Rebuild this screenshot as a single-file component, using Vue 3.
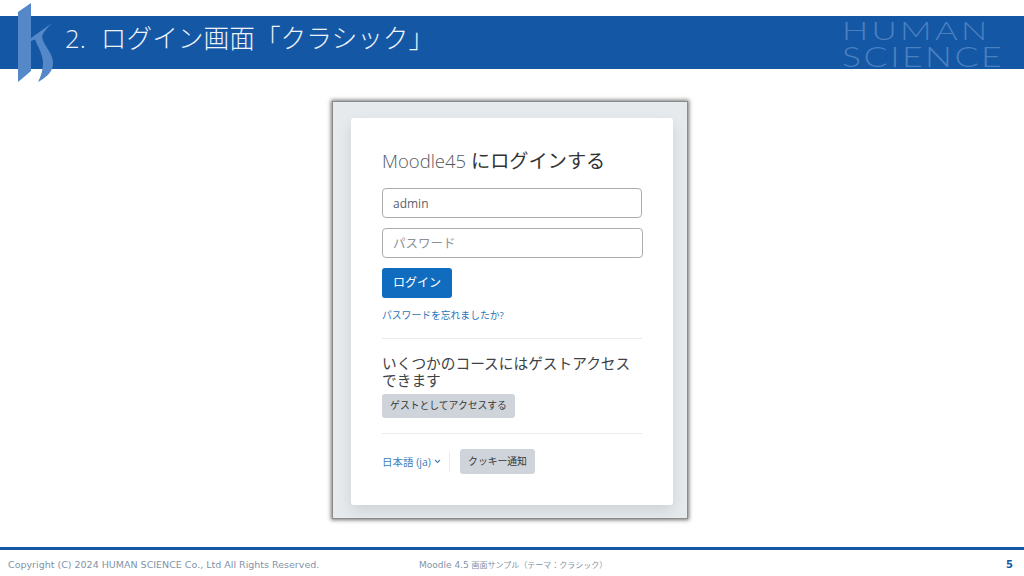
<template>
  <div class="page">
    <header class="band">
      <svg class="mark" width="60" height="84" viewBox="0 0 60 84" aria-hidden="true">
        <path class="mark-a" d="M18 12 L31 3 L31 71 L18 82 Z" />
        <path class="mark-b" d="M52 23 L31 38 L31 41 L35 39.5 C38 47 43 55 43 63 C43 70 41 76 38 82 C45 78 53 73 53 63 C53 52 43 46 42 36 C44 31 48 27 52 23 Z" />
      </svg>
      <h1 class="title"><span class="title-num">2.</span>ログイン画面「クラシック」</h1>
      <div class="brand"><span class="brand-first">HUMAN</span><span class="brand-second">SCIENCE</span></div>
    </header>

    <main class="stage">
      <div class="shot">
        <section class="card">
          <h2 class="heading"><span class="thin">Moodle45</span> <span class="heading-ja">にログインする</span></h2>
          <div class="field field-value">admin</div>
          <div class="field field-wide field-hint">パスワード</div>
          <button class="btn-primary" type="button">ログイン</button>
          <a class="forgot">パスワードを忘れましたか?</a>
          <hr class="rule rule-one" />
          <p class="guest-text">いくつかのコースにはゲストアクセス<br />できます</p>
          <button class="btn-soft btn-guest" type="button">ゲストとしてアクセスする</button>
          <hr class="rule rule-two" />
          <div class="foot-row">
            <a class="lang">日本語 (ja)
              <svg width="7" height="5" viewBox="0 0 7 5" aria-hidden="true"><path d="M1 1 L3.5 3.5 L6 1" fill="none" stroke="#4f7fae" stroke-width="1.1" /></svg>
            </a>
            <span class="sep"></span>
            <button class="btn-soft btn-cookie" type="button">クッキー通知</button>
          </div>
        </section>
      </div>
    </main>

    <footer class="footer">
      <span class="copy">Copyright (C) 2024 HUMAN SCIENCE Co., Ltd All Rights Reserved.</span>
      <span class="sample">Moodle 4.5 <span class="sample-ja">画面サンプル（テーマ：クラシック）</span></span>
      <span class="num">5</span>
    </footer>
  </div>
</template>

<script setup>
</script>

<style>
html, body { margin: 0; background: #fff; }
</style>

<style scoped>
.page {
  width: 1024px;
  height: 576px;
  display: flex;
  flex-direction: column;
  overflow: hidden;
  position: relative;
  background: #fff;
  font-family: "Open Sans", "Noto Sans CJK JP", sans-serif;
}
.band {
  margin-top: 16px;
  height: 53px;
  flex: none;
  background: #1457a5;
  display: flex;
  align-items: center;
  justify-content: space-between;
  padding: 0 22px 0 65px;
  position: relative;
}
.mark { position: absolute; left: 0; top: -16px; }
.mark-a, .mark-b { fill: #5488c8; }
.title {
  margin: 0 0 12px;
  color: #eef3fa;
  font-size: 25.7px;
  font-weight: 300;
  white-space: nowrap;
  font-family: "Open Sans", "Noto Sans CJK JP", sans-serif;
}
.title-num { margin-right: 15px; }
.brand {
  width: 160px;
  display: flex;
  flex-direction: column;
  color: #4a80c0;
  font-family: "Lato", sans-serif;
  font-weight: 300;
  line-height: 26px;
}
.brand-first {
  font-size: 26px;
  letter-spacing: 2.5px;
  transform: scaleX(1.335);
  transform-origin: left center;
  white-space: nowrap;
}
.brand-second {
  font-size: 28px;
  letter-spacing: 2px;
  transform: scaleX(1.27);
  transform-origin: left center;
  white-space: nowrap;
}
.stage {
  flex: 1;
  display: flex;
  justify-content: flex-start;
  align-items: flex-start;
  padding: 32px 0 0 332px;
}
.shot {
  width: 356px;
  height: 418px;
  box-sizing: border-box;
  padding: 16px 15px 13px 18px;
  background: #e7eaed;
  border: 1px solid #8c8c8a;
  box-shadow: 0 0 4px 1px #737376;
}
.card {
  width: 322px;
  height: 387px;
  box-sizing: border-box;
  background: #fff;
  border-radius: 3px;
  padding: 30px 31px 0;
  box-shadow: 0 6px 14px rgba(0, 0, 0, 0.1);
  color: #3a3f44;
}
.heading {
  margin: 0 0 15px;
  font-size: 18.5px;
  line-height: 25px;
  font-weight: 400;
  color: #333;
}
.heading-ja { font-size: 19.2px; }
.thin { color: #555b61; font-weight: 300; }
.field {
  width: 260px;
  height: 30px;
  box-sizing: border-box;
  border: 1px solid #a9adb2;
  border-radius: 4px;
  padding-left: 10px;
  font-size: 12px;
  line-height: 29px;
  margin-bottom: 10px;
}
.field-wide { width: 261px; }
.field-value { color: #5c6369; }
.field-hint { color: #8b9095; font-size: 12.5px; }
.btn-primary {
  display: block;
  width: 70px;
  height: 30px;
  padding: 0;
  border: 0;
  border-radius: 3px;
  background: #0f6cbf;
  color: #fff;
  font: 12px/30px "Open Sans", "Noto Sans CJK JP", sans-serif;
}
.forgot {
  display: block;
  margin-top: 11px;
  font-size: 9.8px;
  line-height: 14px;
  color: #2a74b8;
}
.rule {
  height: 1px;
  border: 0;
  margin: 0;
  width: 260px;
  background: #e9ebed;
}
.rule-one { margin-top: 15px; }
.guest-text {
  margin: 16px 0 0;
  font-size: 14.7px;
  line-height: 17px;
  color: #3d4246;
}
.btn-soft {
  display: block;
  padding: 0;
  border: 0;
  border-radius: 3px;
  background: #ced4da;
  color: #33383d;
  font: 9.8px/24px "Open Sans", "Noto Sans CJK JP", sans-serif;
}
.btn-guest { width: 133px; height: 24px; margin-top: 5px; }
.rule-two { margin-top: 15px; }
.foot-row {
  margin-top: 15px;
  height: 25px;
  display: flex;
  align-items: center;
}
.lang {
  display: flex;
  align-items: center;
  gap: 3px;
  width: 67px;
  font-size: 10.5px;
  color: #3b7dbc;
  white-space: nowrap;
}
.sep { width: 1px; height: 20px; background: #e9ebed; }
.btn-cookie { width: 75px; height: 25px; margin-left: 10px; line-height: 25px; }
.footer {
  flex: none;
  height: 24px;
  border-top: 3px solid #1457a5;
  display: flex;
  align-items: center;
  padding: 2px 11px 0 8px;
  color: #7f93a8;
  font-family: "DejaVu Sans", "Noto Sans CJK JP", sans-serif;
}
.copy { width: 411px; white-space: nowrap; font-size: 9.5px; }
.sample { flex: 1; white-space: nowrap; font-size: 9px; }
.sample-ja { font-size: 8px; }
.num { color: #1457a5; font-weight: 700; font-size: 10px; }
</style>
